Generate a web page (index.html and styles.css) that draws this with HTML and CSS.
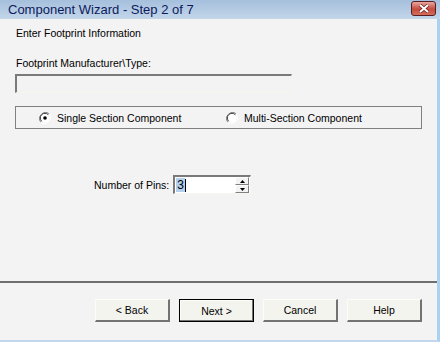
FILE: index.html
```html
<!DOCTYPE html>
<html>
<head>
	<meta http-equiv="Content-Type" content="text/html; charset=utf-8" />
	<title>Component Wizard</title>
	<link rel="stylesheet" href="styles.css">
</head>
<body>
	<div class="window">
		<!-- title bar -->
		<div class="titlebar">
			<span class="title">Component Wizard - Step 2 of 7</span>
			<span class="close">
				<svg width="16" height="9" viewBox="0 0 16 9">
					<path d="M4 1 L12 8 M12 1 L4 8" stroke="#6a2020" stroke-width="3.4"/>
					<path d="M4 1 L12 8 M12 1 L4 8" stroke="#ffffff" stroke-width="2"/>
				</svg>
			</span>
		</div>

		<div class="content">
			<div class="heading">Enter Footprint Information</div>
			<div class="label">Footprint Manufacturer\Type:</div>
			<div class="textbox"></div>

			<div class="groupbox">
				<label class="radio">
					<svg width="12" height="12" viewBox="0 0 12 12">
						<path d="M10.2 1.8 A6 6 0 0 0 1.8 10.2" fill="none" stroke="#808080" stroke-width="1"/>
						<path d="M1.8 10.2 A6 6 0 0 0 10.2 1.8" fill="none" stroke="#ffffff" stroke-width="1"/>
						<circle cx="6" cy="6" r="4.6" fill="#fff"/>
						<path d="M9.3 2.7 A4.6 4.6 0 0 0 2.7 9.3" fill="none" stroke="#404040" stroke-width="1"/>
						<circle cx="6" cy="6" r="1.8" fill="#000"/>
					</svg>
					Single Section Component
				</label>
				<label class="radio">
					<svg width="12" height="12" viewBox="0 0 12 12">
						<path d="M10.2 1.8 A6 6 0 0 0 1.8 10.2" fill="none" stroke="#808080" stroke-width="1"/>
						<path d="M1.8 10.2 A6 6 0 0 0 10.2 1.8" fill="none" stroke="#ffffff" stroke-width="1"/>
						<circle cx="6" cy="6" r="4.6" fill="#fff"/>
						<path d="M9.3 2.7 A4.6 4.6 0 0 0 2.7 9.3" fill="none" stroke="#404040" stroke-width="1"/>
					</svg>
					Multi-Section Component
				</label>
			</div>

			<div class="pins">
				<span>Number of Pins:</span>
				<div class="spinbox">
					<span class="value"><span class="sel">3</span><span class="caret"></span></span>
					<div class="spin">
						<div class="spinbtn"><svg width="5" height="3" viewBox="0 0 5 3"><path d="M2.5 0 L5 3 L0 3 Z" fill="#000"/></svg></div>
						<div class="spinbtn"><svg width="5" height="3" viewBox="0 0 5 3"><path d="M0 0 L5 0 L2.5 3 Z" fill="#000"/></svg></div>
					</div>
				</div>
			</div>
		</div>

		<div class="separator"></div>

		<div class="buttons">
			<input type="button" class="btn" value="&lt; Back"/>
			<input type="button" class="btn default" value="Next &gt;"/>
			<input type="button" class="btn" value="Cancel"/>
			<input type="button" class="btn" value="Help"/>
		</div>
	</div>
</body>
</html>
```

FILE: styles.css
```css
body {
	margin: 0;
	font-family: "Liberation Sans", Arial, sans-serif;
	font-size: 10.5px;
	color: #000;
}

.window {
	width: 440px;
	height: 342px;
	box-sizing: border-box;
	background-color: #f3f3f3;
	border-right: 3px solid #a9d2f2;
	border-bottom: 2px solid #c3d7ec;
	display: flex;
	flex-direction: column;
}

.titlebar {
	height: 19px;
	margin-right: -3px;
	background: linear-gradient(#a5bfdc, #c3d6ea);
	display: flex;
	align-items: center;
	justify-content: space-between;
	padding-left: 8px;
	padding-right: 4px;
}

.title {
	color: #0c1a5c;
	font-size: 13px;
}

.close {
	width: 23px;
	height: 13px;
	margin-top: -3px;
	border: 1px solid #5a1c1c;
	border-radius: 3px;
	background: linear-gradient(#e8a8a0, #c64a3c 55%, #d2705c);
	display: flex;
	align-items: center;
	justify-content: center;
}

.content {
	flex: 1;
	padding-left: 15px;
	padding-top: 8px;
}

.heading {
	margin-left: 1px;
	line-height: 13px;
}

.label {
	margin-top: 17px;
	margin-left: 1px;
	line-height: 13px;
}

.textbox {
	width: 277px;
	height: 19px;
	box-sizing: border-box;
	margin-top: 4px;
	border-top: 2px solid #7a7a7a;
	border-left: 2px solid #7a7a7a;
	border-right: 1px solid #f6f6ec;
	border-bottom: 1px solid #f6f6ec;
	background-color: #f3f3f3;
}

.groupbox {
	width: 407px;
	height: 23px;
	box-sizing: border-box;
	margin-top: 13px;
	border: 1px solid #808080;
	display: flex;
	align-items: center;
}

.radio {
	display: flex;
	align-items: center;
	gap: 6px;
}

.radio:first-child {
	margin-left: 23px;
	width: 187px;
}

.pins {
	margin-top: 46px;
	margin-left: 79px;
	display: flex;
	align-items: center;
	gap: 4px;
}

.spinbox {
	width: 78px;
	height: 19px;
	box-sizing: border-box;
	border-top: 2px solid #7a7a7a;
	border-left: 2px solid #7a7a7a;
	border-right: 1px solid #f6f6ec;
	border-bottom: 1px solid #f6f6ec;
	background-color: #fff;
	display: flex;
	justify-content: space-between;
	align-items: center;
}

.value {
	display: flex;
	align-items: center;
	padding-left: 1px;
	font-size: 12px;
}

.sel {
	background-color: #b3d1ee;
	padding: 0 1px;
	line-height: 14px;
}

.caret {
	width: 1px;
	height: 13px;
	background-color: #000;
}

.spin {
	display: flex;
	flex-direction: column;
	height: 16px;
	margin-right: 1px;
}

.spinbtn {
	width: 14px;
	height: 8px;
	box-sizing: border-box;
	background-color: #f3f3f3;
	border-top: 1px solid #fff;
	border-left: 1px solid #fff;
	border-right: 1px solid #808080;
	border-bottom: 1px solid #808080;
	display: flex;
	align-items: center;
	justify-content: center;
}

.separator {
	height: 2px;
	background-color: #6e6e6e;
}

.buttons {
	height: 57px;
	display: flex;
	padding-left: 95px;
	padding-top: 16px;
	box-sizing: border-box;
	gap: 9px;
}

.btn {
	width: 75px;
	height: 23px;
	box-sizing: border-box;
	margin: 0;
	padding: 0;
	font-family: "Liberation Sans", Arial, sans-serif;
	font-size: 10.5px;
	color: #000;
	background-color: #f4f4ee;
	border-top: 1px solid #fdfdf5;
	border-left: 1px solid #fdfdf5;
	border-right: 2px solid #737373;
	border-bottom: 2px solid #737373;
}

.btn.default {
	border: 1px solid #000;
	box-shadow: inset -1px -1px 0 #737373, inset 1px 1px 0 #fdfdf5;
}
```
